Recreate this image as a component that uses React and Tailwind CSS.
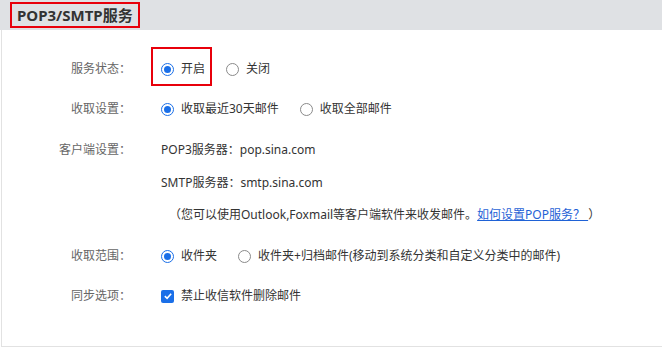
import React from "react";

const font = { fontFamily: '"Noto Sans", "Noto Sans CJK SC", sans-serif' };

const Radio = ({ checked }) =>
  checked ? (
    <span className="w-[13px] h-[13px] rounded-full border border-[#1a6fe8] flex items-center justify-center shrink-0">
      <span className="w-[7px] h-[7px] rounded-full bg-[#1a6fe8]" />
    </span>
  ) : (
    <span className="w-[13px] h-[13px] rounded-full border border-[#8a8a8a] bg-white shrink-0" />
  );

const Option = ({ checked, children, boxed }) => (
  <span className="relative flex items-center mr-[21px]">
    {boxed && (
      <span className="absolute left-[-10px] right-[-7px] top-[-13px] bottom-[-8px] border-2 border-[#e8000b]" />
    )}
    <Radio checked={checked} />
    <span className="ml-[7px]">{children}</span>
  </span>
);

const Row = ({ label, className = "", children }) => (
  <div className={"flex items-center h-[20px] " + className}>
    <div className="w-[129px] shrink-0 text-right text-[#666]">{label}</div>
    <div className="ml-[30px] flex items-center text-[#333]">{children}</div>
  </div>
);

const App = () => {
  return (
    <div className="w-[662px] h-[351px] bg-white text-[12px]" style={font}>
      <div className="h-[30px] bg-[#dfe1e4] pl-[10px] pt-[2px]">
        <div className="inline-flex items-center h-[26px] px-[5px] border-2 border-[#e8000b] text-[15px] font-bold text-[#333]">
          POP3/SMTP服务
        </div>
      </div>
      <div className="ml-px h-[317px] border-l border-b border-[#e2e2e2] flex flex-col pt-[29px]">
        <Row label="服务状态：">
          <Option checked boxed>开启</Option>
          <Option>关闭</Option>
        </Row>
        <Row label="收取设置：" className="mt-[20px]">
          <Option checked>收取最近30天邮件</Option>
          <Option>收取全部邮件</Option>
        </Row>
        <Row label="客户端设置：" className="mt-[21px]">
          POP3服务器：pop.sina.com
        </Row>
        <Row label="" className="mt-[13px]">
          SMTP服务器：smtp.sina.com
        </Row>
        <Row label="" className="mt-[12px]">
          <span className="pl-[8px]">
            （您可以使用Outlook,Foxmail等客户端软件来收发邮件。
            <a href="#" className="text-[#1f62d6] underline">如何设置POP服务？ </a>）
          </span>
        </Row>
        <Row label="收取范围：" className="mt-[21px]">
          <Option checked>收件夹</Option>
          <Option>收件夹+归档邮件(移动到系统分类和自定义分类中的邮件)</Option>
        </Row>
        <Row label="同步选项：" className="mt-[20px]">
          <span className="flex items-center">
            <span className="w-[13px] h-[13px] rounded-[2px] bg-[#1a6fe8] flex items-center justify-center">
              <svg viewBox="0 0 12 12" className="w-[10px] h-[10px]">
                <path d="M2.2 6.2 L4.9 8.8 L9.8 3.2" fill="none" stroke="white" strokeWidth="1.9" />
              </svg>
            </span>
            <span className="ml-[7px]">禁止收信软件删除邮件</span>
          </span>
        </Row>
      </div>
    </div>
  );
};

export default App;
